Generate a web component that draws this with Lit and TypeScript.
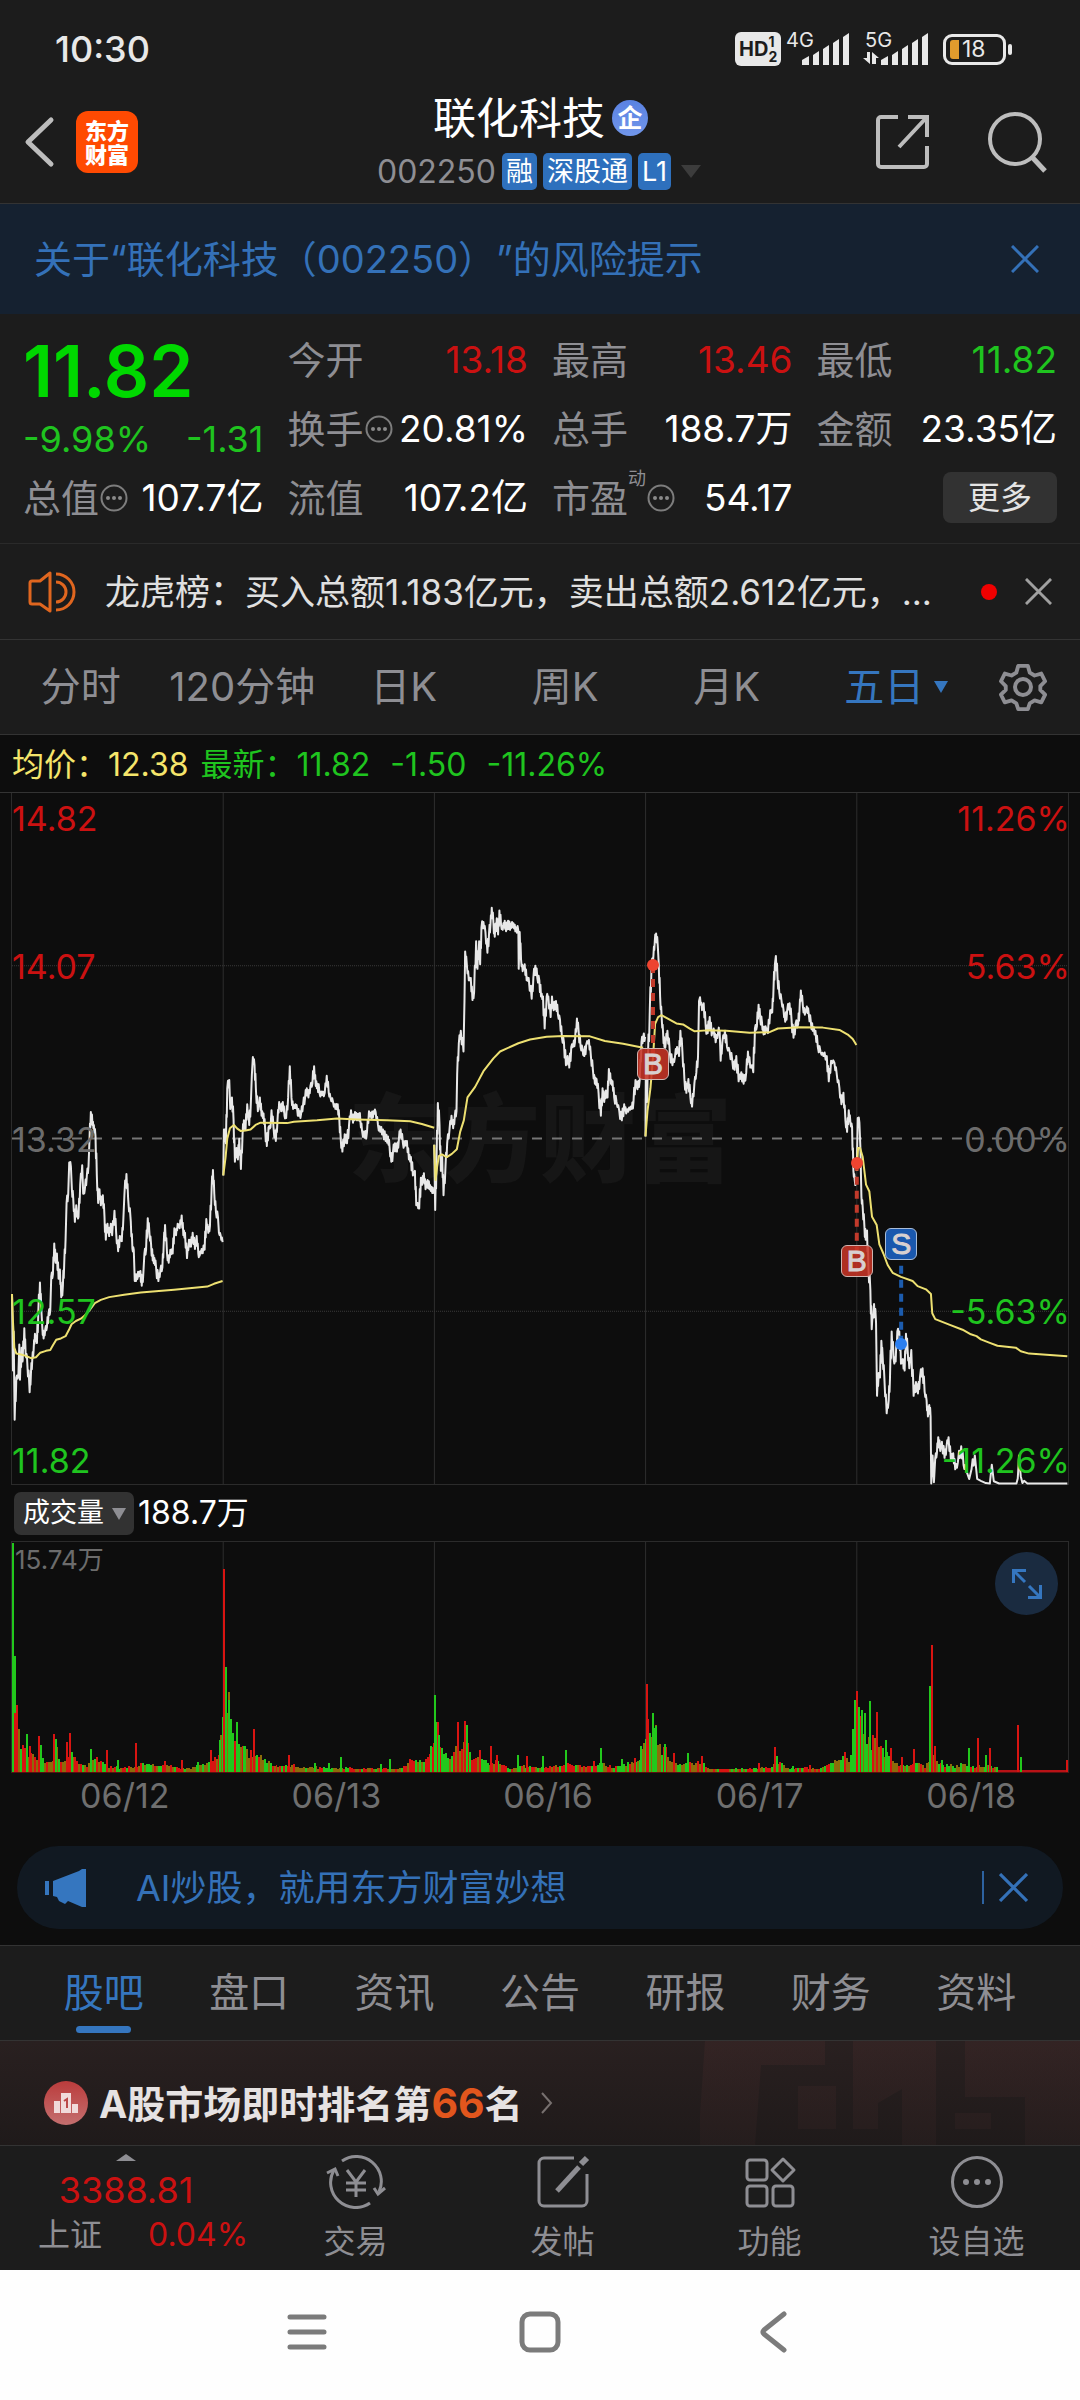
import { LitElement, html, svg, css } from "lit";
import { customElement } from "lit/decorators.js";

const FONT = css`"Inter", "Noto Sans CJK SC", sans-serif`;

/* ---------- chart data ---------- */

/* Plot space of the five-day price chart: x 33..3207, y 27..1532 */
const PRICE: string[] = [
  "33,1118 36,1285 38,1200 41,1392 46,1300 52,1298 55,1228 57,1305 62,1235 65,1265 70,1193 74,1250 78,1255 81,1298 83,1285 86,1332 90,1290 94,1260 98,1240 102,1205 108,1225 112,1160 117,1093 121,1150 124,1190 128,1215 133,1195 138,1190 143,1160 148,1155 151,1080 156,1075 160,1008 164,1050 168,1030 173,1085 177,1065 181,1125 186,1100 190,1050 194,1000 197,920 202,900 205,832 210,840 213,890 217,910 222,961 226,925 229,950 233,950 238,880 244,838 247,900 252,890 258,860 263,840 266,780 270,722 275,750 279,750 284,775 288,860 292,920 296,890 300,925 306,903 311,950 315,1000 320,965 325,992 330,965 334,990 341,937 346,985 352,1025 357,992 363,1003 368,950 371,900 377,857 382,910 390,960 395,1020 399,1022 402,1090 408,1075 414,1080 419,1068 423,1100 428,1070 431,1030 436,1022 441,953 446,985 451,1010 456,1045 461,1040 466,1060 473,1090 479,1065 485,1060 489,1010 493,968 499,1030 504,1050 509,1022 516,1030 521,975 526,990 531,965 537,975 543,947 548,990 553,985 559,1040 565,1000 571,1015 576,985 583,1020 588,992 593,1030 597,1035 603,1020 612,1022 617,955 623,985 628,970 633,890 637,848 641,900 646,940 652,950 655,985 660,990 666,1005",
  "668,860 670,760 673,760 676,790 680,670 686,652 689,715 694,690 699,740 703,830 708,800 712,825 716,780 721,846 726,770 730,740 735,760 740,705 746,750 751,700 754,640 757,602 762,620 766,670 772,720 778,690 783,730 789,725 794,760 799,796 804,755 810,755 813,718 819,755 826,785 831,740 836,700 842,720 847,700 852,730 857,735 863,690 868,622 873,690 878,715 885,705 890,715 896,730 902,725 908,705 914,690 919,670 924,690 930,665 936,660 941,622 946,665 951,660 957,680 965,685 973,680 979,643 985,680 990,690 998,700 1005,715 1012,705 1017,740 1021,780 1026,808 1033,770 1040,790 1046,750 1052,718 1058,745 1064,722 1070,740 1076,725 1080,740 1085,762 1093,778 1100,765 1106,720 1113,735 1120,720 1126,722 1133,750 1140,765 1148,760 1156,785 1163,775 1168,800 1173,830 1178,810 1184,790 1190,808 1196,780 1201,760 1208,790 1214,795 1220,785 1226,825 1232,820 1238,860 1244,850 1248,925 1252,920 1257,932 1262,865 1266,880 1271,855 1276,890 1282,870 1288,890 1294,885 1300,900",
  "1302,793 1305,935 1309,830 1313,702 1318,750 1322,850 1326,820 1330,903 1336,840 1341,790 1348,760 1354,730 1359,757 1364,730 1369,720 1371,640 1376,572 1382,545 1390,590 1393,480 1395,372 1400,400 1406,435 1412,430 1417,478 1422,460 1428,350 1432,410 1437,350 1440,400 1444,320 1450,308 1456,330 1462,375 1467,330 1471,315 1475,277 1480,310 1484,340 1490,300 1494,335 1498,283 1503,315 1508,325 1514,305 1518,328 1524,305 1530,325 1536,308 1542,322 1548,320 1555,328 1556,410 1559,330 1563,390 1568,415 1574,400 1580,435 1586,430 1595,475 1600,430 1606,403 1612,430 1618,435 1623,470 1629,470 1634,540 1640,470 1645,470 1652,515 1656,470 1661,500 1668,480 1674,510 1680,520 1686,560 1692,570 1698,620 1703,600 1708,625 1714,580 1720,575 1725,570 1731,518 1736,545 1742,580 1748,585 1753,600 1759,575 1767,565 1773,600 1779,630 1785,660 1790,650 1796,680 1803,730 1808,670 1813,700 1818,675 1823,690 1827,628 1833,660 1838,655 1843,690 1850,700 1858,718 1866,740 1873,705 1879,725 1888,712 1896,715 1901,700 1907,652 1913,672 1920,650 1925,570 1930,560 1936,558",
  "1937,775 1938,640 1942,700 1944,620 1950,500 1955,410 1961,380 1965,350 1969,333 1974,360 1977,400 1981,470 1986,520 1990,550 1994,580 1998,570 2003,545 2010,590 2018,620 2026,600 2032,580 2038,600 2042,545 2048,590 2054,650 2060,680 2066,650 2072,690 2077,710 2084,660 2090,635 2095,600 2098,480 2101,472 2107,500 2112,485 2118,535 2124,550 2130,515 2136,555 2142,540 2148,570 2156,545 2160,545 2163,610 2168,570 2176,545 2182,580 2190,590 2198,610 2205,630 2210,600 2217,655 2225,635 2232,660 2240,635 2245,590 2252,625 2258,620 2261,635 2266,540 2272,535 2277,488 2282,520 2287,525 2292,553 2298,535 2305,550 2312,500 2318,505 2322,450 2326,400 2329,382 2334,430 2339,460 2346,480 2352,500 2357,525 2363,500 2370,485 2376,520 2382,560 2388,530 2396,530 2400,500 2404,457 2410,490 2416,510 2422,492 2428,510 2434,525 2440,545 2448,545 2455,580 2463,590 2472,600 2482,600 2488,655 2495,610 2505,615 2512,640 2520,670 2526,705 2532,680 2538,740 2543,765 2548,718 2553,745 2558,755 2562,850 2566,870 2571,876",
  "2572,850 2575,735 2580,745 2583,800 2586,905 2590,930 2595,970 2599,1000 2603,980 2607,1060 2613,1110 2617,1195 2624,1140 2630,1180 2633,1340 2638,1290 2642,1300 2646,1220 2650,1255 2655,1300 2662,1378 2668,1350 2672,1300 2677,1200 2683,1260 2689,1265 2694,1200 2700,1200 2705,1270 2711,1260 2716,1285 2720,1205 2725,1240 2730,1280 2736,1240 2743,1340 2750,1310 2756,1335 2762,1300 2770,1280 2776,1330 2782,1350 2786,1385 2790,1360 2794,1385 2796,1531 2800,1470 2804,1528 2808,1475 2813,1465 2817,1430 2823,1460 2828,1440 2836,1475 2842,1450 2848,1430 2855,1480 2862,1465 2868,1500 2876,1485 2886,1450 2893,1490 2900,1500 2910,1521 2917,1500 2927,1470 2934,1521 2945,1525 2960,1530 2972,1531 2978,1490 2984,1526 3000,1531 3052,1531 3056,1520 3060,1470 3065,1515 3070,1530 3075,1525 3085,1531 3205,1531",
];

const AVERAGE: string[] = [
  "33,1118 36,1180 40,1235 46,1248 60,1250 75,1253 90,1258 105,1256 118,1246 135,1242 148,1240 156,1230 166,1218 180,1215 194,1210 205,1195 212,1184 225,1177 240,1172 255,1163 268,1152 282,1138 300,1131 325,1125 370,1120 420,1115 520,1109 620,1102 640,1096 666,1090",
  "668,860 675,820 680,780 688,757 700,750 710,758 720,763 735,762 750,760 765,750 780,745 860,746 880,743 950,740 1010,736 1070,738 1160,740 1230,742 1265,748 1302,756",
  "1302,793 1306,870 1311,840 1316,818 1325,814 1340,820 1355,813 1370,803 1380,765 1391,740 1402,690 1425,667 1450,633 1480,605 1500,590 1555,572 1590,564 1640,558 1690,556 1770,557 1815,567 1870,573 1930,582",
  "1937,775 1943,720 1952,670 1960,600 1966,530 1975,515 1985,511 2000,517 2015,523 2030,529 2050,531 2070,540 2085,546 2120,544 2180,545 2250,549 2310,548 2335,540 2400,537 2470,538 2520,543 2545,553 2560,563 2571,576",
  "2572,850 2576,800 2582,800 2590,820 2600,880 2610,895 2618,950 2632,968 2640,1010 2652,1030 2665,1055 2680,1072 2705,1081 2740,1090 2755,1101 2780,1108 2795,1118 2799,1160 2808,1173 2850,1185 2890,1196 2915,1206 2932,1210 2945,1217 2970,1224 2995,1231 3050,1235 3065,1243 3090,1248 3205,1254",
];

/* Volume in plot units (1058 wide, 232 tall): background level, then single peaks */
const VOLUME_LEVEL: [number, number][] = [
  [0, 121], [3, 108], [4, 57], [6, 40], [8, 28], [11, 22], [23, 16], [34, 12], [37, 9], [41, 10], [43, 24], [47, 15], [51, 9],
  [59, 20], [65, 10], [69, 10], [74, 7], [80, 17], [87, 11], [92, 7], [99, 5], [111, 5], [122, 5], [129, 9], [137, 8], [144, 5],
  [154, 8], [161, 5], [177, 4], [184, 6], [194, 9], [200, 14], [204, 15], [207, 26], [211, 55], [215, 80], [217, 68], [221, 42],
  [225, 30], [229, 25], [232, 24], [236, 18], [243, 22], [249, 14], [255, 11], [261, 7], [267, 5], [282, 7], [289, 4], [304, 5],
  [324, 4], [335, 5], [344, 3], [370, 4], [379, 4], [389, 4], [397, 8], [402, 12], [415, 11], [420, 25], [424, 50], [428, 34],
  [432, 20], [436, 15], [441, 15], [445, 26], [450, 24], [456, 32], [459, 16], [464, 13], [470, 15], [477, 9], [485, 12], [489, 7],
  [500, 4], [510, 6], [527, 5], [539, 5], [550, 9], [562, 7], [579, 5], [592, 9], [601, 5], [612, 7], [618, 9], [627, 10],
  [630, 20], [635, 36], [639, 38], [643, 42], [646, 36], [650, 23], [655, 22], [659, 10], [669, 7], [675, 10], [683, 8], [690, 12],
  [695, 5], [704, 3], [719, 3], [743, 4], [758, 5], [768, 10], [774, 4], [789, 4], [811, 4], [820, 9], [830, 14], [836, 12],
  [841, 16], [844, 50], [848, 62], [852, 45], [856, 34], [860, 26], [864, 38], [868, 26], [874, 20], [880, 15], [887, 9],
  [900, 6], [909, 12], [914, 5], [918, 12], [922, 17], [926, 14], [932, 7], [946, 6], [952, 9], [960, 6], [971, 6], [984, 6],
  [989, 2], [1007, 2], [1011, 8], [1016, 3], [1024, 2], [1054, 2], [1058, 8],
];

type Peak = [number, number, "up" | "down"];
const VOLUME_PEAKS: Peak[] = [
  [1, 231, "down"], [3, 60, "up"], [5, 43, "up"], [15, 38, "down"], [18, 26, "up"], [27, 36, "up"], [29, 27, "down"],
  [42, 38, "up"], [44, 33, "down"], [55, 30, "up"], [58, 39, "up"], [60, 20, "down"], [79, 23, "down"], [95, 22, "up"],
  [106, 12, "down"], [124, 29, "up"], [153, 11, "up"], [170, 12, "up"], [186, 10, "down"], [199, 22, "up"], [208, 32, "down"],
  [212, 205, "up"], [214, 106, "down"], [217, 73, "down"], [219, 53, "down"], [225, 50, "down"], [232, 26, "down"],
  [242, 43, "up"], [278, 17, "up"], [304, 9, "down"], [318, 9, "down"], [330, 15, "down"], [370, 8, "down"], [379, 13, "down"],
  [399, 13, "up"], [420, 26, "down"], [424, 78, "down"], [427, 50, "up"], [428, 37, "down"], [447, 50, "up"], [454, 51, "up"],
  [456, 47, "down"], [469, 22, "up"], [480, 26, "up"], [486, 17, "up"], [507, 17, "down"], [516, 16, "up"], [532, 16, "down"],
  [555, 22, "down"], [583, 11, "up"], [590, 24, "down"], [611, 13, "down"], [624, 14, "up"], [630, 26, "down"],
  [636, 89, "up"], [637, 53, "up"], [642, 60, "down"], [645, 46, "down"], [654, 28, "down"], [663, 19, "up"], [677, 19, "down"],
  [691, 16, "up"], [748, 9, "up"], [764, 25, "up"], [766, 16, "down"], [782, 6, "down"], [800, 7, "up"], [835, 20, "up"],
  [843, 43, "down"], [845, 73, "down"], [847, 82, "up"], [849, 66, "down"], [852, 63, "down"], [855, 60, "down"],
  [860, 72, "down"], [867, 61, "up"], [876, 32, "down"], [881, 24, "up"], [892, 15, "up"], [904, 23, "up"],
  [920, 87, "down"], [922, 128, "up"], [925, 26, "up"], [932, 12, "down"], [959, 24, "down"], [968, 34, "up"],
  [976, 17, "down"], [980, 24, "up"], [1008, 47, "up"], [1011, 15, "down"], [1057, 12, "up"],
];

function levelAt(x: number): number {
  for (let i = 1; i < VOLUME_LEVEL.length; i++) {
    const [x1, h1] = VOLUME_LEVEL[i];
    if (x <= x1) {
      const [x0, h0] = VOLUME_LEVEL[i - 1];
      return h0 + ((h1 - h0) * (x - x0)) / (x1 - x0);
    }
  }
  return 2;
}

/* Small repeatable generator, so the minute values look the same on each render */
function sequence(seed: number): () => number {
  let s = seed;
  return () => {
    s = (s * 1103515245 + 12345) % 2147483648;
    return s / 2147483648;
  };
}

/* Puts a small swing between each two turning points of a day */
function withSwings(points: string, seed: number): string {
  const next = sequence(seed);
  const pts = points.split(" ").map((p) => p.split(",").map(Number));
  const out: string[] = [];
  pts.forEach(([x, y], i) => {
    out.push(`${x},${y}`);
    const after = pts[i + 1];
    if (!after || after[0] - x < 4 || y > 1500 || after[1] > 1500) return;
    const mid = (y + after[1]) / 2;
    const swing = 2 + 7 * next();
    const dir = after[1] > y ? -1 : 1;
    out.push(`${x + (after[0] - x) * 0.35},${(mid - dir * swing).toFixed(1)}`);
    out.push(`${x + (after[0] - x) * 0.65},${(mid + dir * swing).toFixed(1)}`);
  });
  return out.join(" ");
}

const PRICE_LINES = PRICE.map((p, i) => withSwings(p, i + 3));

const COLUMNS = [20, 40, 60, 80].map((p) => p + "%");

@customElement("price-chart")
export class PriceChart extends LitElement {
  static styles = css`
    :host { display: block; font-family: ${FONT}; }
    .plot { position: relative; margin: 0 11px; height: 692px; box-sizing: border-box; border: solid #2b2b2b; border-width: 0 1px 1px; }
    .watermark {
      position: absolute; inset: 0; display: flex; align-items: center; justify-content: center;
      font-size: 96px; line-height: 96px; font-weight: 900; color: #161616;
    }
    .canvas { position: absolute; inset: 0; width: 100%; height: 100%; overflow: visible; }
    .grid { stroke: #2e2e2e; stroke-width: 1; }
    .dots { stroke: #3a3a3a; stroke-width: 1; stroke-dasharray: 1 1; }
    .zero { stroke: #757575; stroke-width: 2; stroke-dasharray: 10 10; }
    .line { fill: none; stroke: #e8e8e8; stroke-width: 2; stroke-linejoin: round; vector-effect: non-scaling-stroke; }
    .avg { fill: none; stroke: #ede071; stroke-width: 2; stroke-linejoin: round; vector-effect: non-scaling-stroke; }
    .label { position: absolute; font-size: 34px; line-height: 40px; transform: translateY(-50%); }
    .left { left: 0; }
    .right { right: -2px; }
    .l0 { top: 26px; } .l1 { top: calc(25% + 1px); } .l2 { top: calc(50% + 1px); } .l3 { top: calc(75% + 1px); } .l4 { top: calc(100% - 23px); }
    .up { color: #cb1111; } .down { color: #1fc41f; } .flat { color: #6c6c6c; }
    .stem { stroke-width: 4; stroke-dasharray: 8 6; }
    .stem.buy { stroke: #c13a2b; } .stem.sell { stroke: #1c5cae; }
    .dot { position: absolute; width: 12px; height: 12px; border-radius: 50%; transform: translate(-50%, -50%); }
    .dot.buy { background: #ee4430; } .dot.sell { background: #2b7ff0; }
    .badge {
      position: absolute; width: 32px; height: 32px; box-sizing: border-box; border: 1px solid #cfb4b0; border-radius: 6px;
      transform: translate(-50%, -50%); font: 30px/30px "Liberation Sans", sans-serif; text-align: center; color: #d8d0d0;
      -webkit-text-stroke: 1px #d8d0d0;
    }
    .badge.buy { background: rgba(198, 52, 38, 0.88); } .badge.sell { background: #1a58ae; border-color: #a8bcd8; }
  `;

  private labels: [string, string, string][] = [
    ["14.82", "11.26%", "up"],
    ["14.07", "5.63%", "up"],
    ["13.32", "0.00%", "flat"],
    ["12.57", "-5.63%", "down"],
    ["11.82", "-11.26%", "down"],
  ];

  /* x and y are percentages of the plot; from = the traded price, to = the badge */
  private trades = [
    { kind: "buy", text: "B", x: 60.7, from: 24.9, to: 39.2 },
    { kind: "buy", text: "B", x: 80, from: 53.5, to: 67.7 },
    { kind: "sell", text: "S", x: 84.2, from: 79.7, to: 65.3 },
  ];

  render() {
    return html`
      <div class="plot">
        <div class="watermark" aria-hidden="true">东方财富</div>
        <svg class="canvas" aria-hidden="true">
          ${COLUMNS.map((x) => svg`<line class="grid" x1=${x} x2=${x} y1="0" y2="100%" />`)}
          <line class="dots" x1="0" x2="100%" y1="25%" y2="25%" />
          <line class="dots" x1="0" x2="100%" y1="75%" y2="75%" />
          <line class="zero" x1="0" x2="100%" y1="50%" y2="50%" />
        </svg>
        <svg class="canvas" viewBox="33 27 3174 1505" preserveAspectRatio="none" role="img" aria-label="五日走势">
          ${PRICE_LINES.map((p) => svg`<polyline class="line" points=${p} />`)}
          ${AVERAGE.map((p) => svg`<polyline class="avg" points=${p} />`)}
        </svg>
        <svg class="canvas" aria-hidden="true">
          ${this.trades.map((t) => svg`<line class="stem ${t.kind}" x1="${t.x}%" x2="${t.x}%" y1="${t.from}%" y2="${t.to}%" />`)}
        </svg>
        ${this.trades.map(
          (t) => html`
            <span class="dot ${t.kind}" style="left:${t.x}%;top:${t.from}%"></span>
            <span class="badge ${t.kind}" style="left:${t.x}%;top:${t.to}%">${t.text}</span>
          `
        )}
        ${this.labels.map(
          ([price, pct, tone], i) => html`
            <span class="label left l${i} ${tone}">${price}</span>
            <span class="label right l${i} ${tone}">${pct}</span>
          `
        )}
      </div>
    `;
  }
}

@customElement("volume-chart")
export class VolumeChart extends LitElement {
  static styles = css`
    :host { display: block; font-family: ${FONT}; }
    .plot { position: relative; margin: 0 11px; height: 232px; box-sizing: border-box; border: 1px solid #2b2b2b; border-bottom-color: #5a1010; }
    .canvas { position: absolute; inset: 0; width: 100%; height: 100%; overflow: visible; }
    .grid { stroke: #2e2e2e; stroke-width: 1; }
    .bars { shape-rendering: crispEdges; }
    .up { fill: #d81411; } .down { fill: #22c81c; } .mix { fill: #8c6c0a; }
    .tail { fill: #b81216; }
    .max { position: absolute; left: 3px; top: 2px; font-size: 26px; line-height: 32px; color: #6c6c6c; }
    .expand {
      position: absolute; right: 10px; top: 10px; width: 63px; height: 63px; padding: 0; border: 0; border-radius: 50%;
      background: #1a2b40; display: flex; align-items: center; justify-content: center; cursor: pointer;
    }
    .dates { display: flex; padding: 0 3px 0 19px; }
    .date { flex: 1; text-align: center; font-size: 34px; line-height: 46px; color: #6f6f6f; }
  `;

  private bars() {
    const next = sequence(20);
    const out = [];
    for (let x = 0; x < 988; x += 2) {
      const h = Math.max(3, levelAt(x) * (0.7 + 0.5 * next()));
      const r = next();
      const tone = r < 0.3 ? "up" : r < 0.6 ? "down" : "mix";
      out.push(svg`<rect class=${tone} x=${x} y=${232 - h} width="2" height=${h} />`);
    }
    return out;
  }

  render() {
    return html`
      <div class="plot">
        <svg class="canvas" aria-hidden="true">
          ${COLUMNS.map((x) => svg`<line class="grid" x1=${x} x2=${x} y1="0" y2="100%" />`)}
        </svg>
        <svg class="canvas bars" viewBox="0 0 1058 232" preserveAspectRatio="none" role="img" aria-label="成交量柱状图">
          ${this.bars()}
          <rect class="tail" x="988" y="230" width="70" height="2" />
          ${VOLUME_PEAKS.map(([x, h, tone]) => svg`<rect class=${tone} x=${x - 1} y=${232 - h} width="2" height=${h} />`)}
        </svg>
        <span class="max">15.74万</span>
        <button class="expand" aria-label="全屏">
          <svg width="34" height="34" viewBox="0 0 34 34" fill="none" stroke="#3576bf" stroke-width="3">
            <path d="M3.500 16V3.500H16M4 4l11 11M30.500 18v12.500H18M30 30L19 19" />
          </svg>
        </button>
      </div>
      <div class="dates">
        ${["06/12", "06/13", "06/16", "06/17", "06/18"].map((d) => html`<span class="date">${d}</span>`)}
      </div>
    `;
  }
}

const more = html`<svg class="info" width="28" height="30" viewBox="0 0 28 28" aria-hidden="true">
  <circle cx="14" cy="14" r="12.500" fill="none" stroke="#7d7d7d" stroke-width="2" />
  <g fill="#8a8a8a"><circle cx="8" cy="14" r="2" /><circle cx="14" cy="14" r="2" /><circle cx="20" cy="14" r="2" /></g>
</svg>`;

const cross = (size: number) => html`<svg width=${size} height=${size} viewBox="0 0 28 28" fill="none" stroke="currentColor" stroke-width="3">
  <path d="M1 1L27 27M27 1L1 27" />
</svg>`;

const signal = html`<svg width="48" height="32" viewBox="0 0 48 32" fill="#e8e8e8" aria-hidden="true">
  <path d="M0 27l7-4v9H0zM11 22l6-4v14h-6zM21 16l6-4v20h-6zM31 10l6-4v26h-6zM41 4l6-4v32h-6z" />
</svg>`;

@customElement("app-root")
export class AppRoot extends LitElement {
  static styles = css`
    :host { display: block; background: #0d0d0d; color: #fff; font-family: ${FONT}; }
    * { box-sizing: border-box; }
    button, select { font: inherit; color: inherit; background: none; border: 0; padding: 0; margin: 0; cursor: pointer; }
    a { color: inherit; text-decoration: none; }
    svg { display: block; flex: none; }
    .panel { background: #1c1c1c; }

    .status { display: flex; align-items: center; padding: 4px 74px 0 55px; height: 94px; }
    .time { flex: 1; font-size: 36px; line-height: 44px; font-weight: 500; color: #e8e8e8; }
    .hd {
      display: flex; align-items: center; width: 46px; height: 34px; padding-left: 4px; border-radius: 6px; background: #e8e8e8; color: #1c1c1c;
      font-size: 20px; line-height: 20px; font-weight: 700;
    }
    .hd-num { display: flex; flex-direction: column; font-size: 14px; line-height: 15px; }
    .net { position: relative; display: flex; padding-left: 16px; margin-left: 5px; }
    .net.second { padding-left: 18px; margin-left: 13px; }
    .gen { position: absolute; left: 0; top: 0; font-size: 20px; line-height: 15px; color: #e8e8e8; }
    .second .gen { left: 2px; }
    .updown { position: absolute; left: 0; bottom: 1px; }
    .battery { position: relative; display: flex; align-items: center; gap: 3px; width: 63px; height: 31px; margin-left: 14px; padding-left: 4px; border: 3px solid #e8e8e8; border-radius: 9px; }
    .battery::after { content: ""; position: absolute; left: 62px; top: 7px; width: 4px; height: 11px; border-radius: 2px; background: #e8e8e8; }
    .charge { width: 9px; height: 19px; border-radius: 3px 0 0 3px; background: #e09b2d; }
    .level { font-size: 23px; line-height: 25px; color: #e8e8e8; }

    .header { display: grid; grid-template-columns: 1fr auto 1fr; align-items: center; height: 110px; padding: 0 32px 13px 24px; border-bottom: 1px solid #333; }
    .home { display: flex; align-items: center; gap: 21px; }
    .logo {
      width: 62px; height: 62px; padding-top: 8px; border-radius: 12px; background: #ff4a02; color: #fff;
      font-size: 22px; line-height: 24px; font-weight: 900; text-align: center;
    }
    .title { display: flex; flex-direction: column; align-items: center; gap: 11px; padding-left: 6px; }
    .name { display: flex; align-items: center; gap: 7px; margin: 0; padding-left: 3px; font-size: 43px; line-height: 48px; font-weight: 400; }
    .corp { width: 36px; height: 36px; border-radius: 50%; background: linear-gradient(#5a82e2, #7196ea); font-size: 25px; line-height: 36px; font-weight: 700; text-align: center; }
    .code { display: flex; align-items: center; gap: 6px; font-size: 32px; line-height: 37px; color: #8e8e93; }
    .tag { padding: 0 4px; border-radius: 5px; background: #2e70bd; color: #fff; font-size: 27px; line-height: 37px; }
    .caret { margin-left: 4px; }
    .tools { display: flex; justify-content: flex-end; gap: 58px; }

    .risk { display: flex; align-items: center; justify-content: space-between; height: 110px; padding: 0 41px 0 34px; background: #152130; color: #3471b8; font-size: 38px; line-height: 48px; text-spacing-trim: space-all; }

    .quotes { display: grid; grid-template-columns: repeat(4, 1fr); grid-auto-rows: 69px; column-gap: 24px; padding: 11px 23px 11px; border-bottom: 1px solid #2a2a2a; font-size: 37px; line-height: 44px; }
    .last { grid-row: span 2; display: flex; flex-direction: column; }
    .price { font-size: 71px; line-height: 92px; font-weight: 600; color: #00d800; }
    .change { display: flex; justify-content: space-between; font-size: 36px; color: #1fc41f; }
    .cell { display: flex; align-items: center; white-space: nowrap; }
    .key { font-size: 38px; color: #8e8e93; }
    .val { margin-left: auto; }
    .sup { align-self: flex-start; font-size: 18px; line-height: 24px; padding-top: 4px; color: #8e8e93; }
    .up { color: #cb1111; } .down { color: #1fc41f; }
    .info { margin-left: 1px; }
    .more { margin-left: auto; width: 114px; height: 51px; border-radius: 8px; background: #323232; color: #e4e4e4; font-size: 32px; line-height: 48px; }

    .ticker { display: flex; align-items: center; height: 96px; padding: 0 28px; border-bottom: 1px solid #333; color: #e0e0e0; font-size: 35px; line-height: 48px; }
    .news { flex: 1; margin-left: 29px; white-space: nowrap; }
    .red-dot { width: 16px; height: 16px; border-radius: 50%; background: #f00000; margin: 0 28px; }
    .dim { color: #a0a0a0; }

    .periods { display: flex; align-items: center; height: 95px; border-bottom: 1px solid #333; color: #8e8e93; font-size: 40px; line-height: 48px; }
    .period { flex: 1; white-space: nowrap; }
    .period.active { color: #3576bf; }
    .pulldown { display: inline-flex; align-items: center; gap: 10px; padding-left: 16px; }
    .gear { display: flex; width: 111px; padding-left: 30px; }

    .legend { display: flex; height: 58px; align-items: center; gap: 12px; padding: 2px 0 0 12px; border-bottom: 1px solid #333; font-size: 32px; line-height: 40px; }
    .legend .avg { color: #f5e56b; }
    .legend .group { display: flex; gap: 20px; }
    .legend .pair { display: flex; }

    .vol-head { display: flex; align-items: center; gap: 4px; height: 56px; padding: 0 14px; font-size: 32px; line-height: 40px; }
    .pick { position: relative; display: flex; align-items: center; }
    .pick select { appearance: none; width: 120px; height: 43px; padding: 0 0 0 9px; border-radius: 7px; background: #323232; font-size: 27px; line-height: 40px; }
    .pick svg { position: absolute; right: 8px; top: 16px; pointer-events: none; }

    .ai { display: flex; align-items: center; height: 83px; margin: 27px 17px 16px; padding: 0 35px 0 28px; border-radius: 42px; background: #111922; color: #3471b8; font-size: 36px; line-height: 48px; }
    .ai-text { flex: 1; margin-left: 49px; }
    .ai-close { display: flex; padding-left: 15px; border-left: 2px solid #2d62a0; height: 33px; align-items: center; }

    .sections { display: flex; height: 96px; padding: 0 31px; border: solid #333; border-width: 1px 0; color: #8e8e93; font-size: 40px; line-height: 48px; }
    .section { flex: 1; display: flex; flex-direction: column; align-items: center; padding-top: 23px; }
    .section.active { color: #3576bf; }
    .section.active::after { content: ""; width: 55px; height: 7px; margin-top: 9px; border-radius: 4px; background: #3576bf; }

    .rank { position: relative; display: flex; align-items: center; height: 105px; padding: 20px 44px 0; border-bottom: 1px solid #333; background: linear-gradient(#292020, #1f1a1a); color: #e6e2e2; font-size: 38px; line-height: 48px; font-weight: 700; overflow: hidden; }
    .rank-art { position: absolute; right: 0; top: 0; }
    .rank-text { margin: 0 17px 0 11px; }
    .hot { font-size: 41px; color: #e2561d; }

    .bottom { display: flex; height: 124px; color: #8e8e93; font-size: 32px; line-height: 40px; }
    .index { flex: 0 0 252px; display: flex; flex-direction: column; align-items: center; padding-top: 8px; }
    .index-value { font-size: 36px; line-height: 46px; margin-top: 6px; color: #cb1111; }
    .index-row { display: flex; gap: 46px; padding-left: 38px; align-self: stretch; line-height: 44px; }
    .action { flex: 1; display: flex; flex-direction: column; align-items: center; gap: 13px; padding-top: 9px; }

    .nav { display: flex; justify-content: center; gap: 179px; height: 130px; padding-top: 35px; background: #fefefe; }
    .nav-btn { height: 54px; width: 54px; }
  `;

  private quotes() {
    const cell = (key: unknown, val: string, tone = "") =>
      html`<div class="cell"><span class="key">${key}</span><span class="val ${tone}">${val}</span></div>`;
    const cellInfo = (key: string, val: string, sup = "") =>
      html`<div class="cell">
        <span class="key">${key}</span>${sup ? html`<span class="sup">${sup}</span>` : ""}${more}<span class="val">${val}</span>
      </div>`;
    return html`
      <section class="panel quotes">
        <div class="last">
          <span class="price">11.82</span>
          <div class="change"><span>-9.98%</span><span>-1.31</span></div>
        </div>
        ${cell("今开", "13.18", "up")} ${cell("最高", "13.46", "up")} ${cell("最低", "11.82", "down")}
        ${cellInfo("换手", "20.81%")} ${cell("总手", "188.7万")} ${cell("金额", "23.35亿")}
        ${cellInfo("总值", "107.7亿")} ${cell("流值", "107.2亿")} ${cellInfo("市盈", "54.17", "动")}
        <div class="cell"><button class="more">更多</button></div>
      </section>
    `;
  }

  render() {
    return html`
      <div class="panel status">
        <span class="time">10:30</span>
        <span class="hd">HD<span class="hd-num"><span>1</span><span>2</span></span></span>
        <span class="net"><span class="gen">4G</span>${signal}</span>
        <span class="net second"><span class="gen">5G</span>
          <svg class="updown" width="16" height="12" viewBox="0 0 16 12" fill="#e8e8e8"><path d="M4 0h3v12L0 6h4zM9 12V0l7 6h-3v6z" /></svg>
          ${signal}</span>
        <span class="battery"><span class="charge"></span><span class="level">18</span></span>
      </div>

      <header class="panel header">
        <div class="home">
          <button aria-label="返回">
            <svg width="31" height="52" viewBox="0 0 31 52" fill="none" stroke="#bdbdbd" stroke-width="5" stroke-linecap="round" stroke-linejoin="round">
              <path d="M27 4L4 26L27 48" />
            </svg>
          </button>
          <div class="logo">东方<br />财富</div>
        </div>
        <div class="title">
          <h1 class="name">联化科技<span class="corp">企</span></h1>
          <div class="code">
            <span>002250</span><span class="tag">融</span><span class="tag">深股通</span><span class="tag">L1</span>
            <svg class="caret" width="20" height="13" viewBox="0 0 20 13"><path d="M0 0h20L10 13z" fill="#3c3c3c" /></svg>
          </div>
        </div>
        <div class="tools">
          <button aria-label="分享">
            <svg width="54" height="56" viewBox="0 0 54 56" fill="none" stroke="#bdbdbd" stroke-width="4">
              <path d="M22 3H5a3 3 0 0 0-3 3v44a3 3 0 0 0 3 3h43a3 3 0 0 0 3-3V32M32 3h19v20M51 3L23 33" />
            </svg>
          </button>
          <button aria-label="搜索">
            <svg width="60" height="62" viewBox="0 0 60 62" fill="none" stroke="#bdbdbd" stroke-width="4">
              <circle cx="27" cy="28" r="25" /><path d="M44 46L57 60" stroke-width="5" />
            </svg>
          </button>
        </div>
      </header>

      <div class="risk">
        <a href="#risk">关于“联化科技（002250）”的风险提示</a>
        <button aria-label="关闭提示">${cross(28)}</button>
      </div>

      ${this.quotes()}

      <div class="panel ticker">
        <svg width="48" height="42" viewBox="0 0 48 42" fill="none" stroke="#e0661f" stroke-width="3" stroke-linejoin="round">
          <path d="M22 2v38l-10-7H4a2 2 0 0 1-2-2V12a2 2 0 0 1 2-2h8z" />
          <path d="M28 11a10 10 0 0 1 0 20M28 3a18 18 0 0 1 0 36" />
        </svg>
        <span class="news">龙虎榜：买入总额1.183亿元，卖出总额2.612亿元，...</span>
        <span class="red-dot"></span>
        <button class="dim" aria-label="关闭公告">${cross(27)}</button>
      </div>

      <nav class="panel periods">
        ${["分时", "120分钟", "日K", "周K", "月K"].map((p) => html`<button class="period">${p}</button>`)}
        <button class="period active">
          <span class="pulldown">五日<svg width="14" height="12" viewBox="0 0 14 12"><path d="M0 0h14L7 12z" fill="#3576bf" /></svg></span>
        </button>
        <button class="gear" aria-label="设置">
          <svg width="48" height="50" viewBox="0 0 48 50" fill="none" stroke="#8e8e93" stroke-width="4" stroke-linejoin="round">
            <path d="M19 3h10l2 7 5 3 7-2 4 8-5 5v4l5 5-4 8-7-2-5 3-2 6H19l-2-6-5-3-7 2-4-8 5-5v-4l-5-5 4-8 7 2 5-3z" transform="translate(1 1) scale(.96)" />
            <circle cx="24" cy="25" r="8" />
          </svg>
        </button>
      </nav>

      <div class="legend">
        <span class="pair avg"><span>均价：</span><span>12.38</span></span>
        <span class="group down"><span class="pair"><span>最新：</span><span>11.82</span></span><span>-1.50</span><span>-11.26%</span></span>
      </div>

      <price-chart></price-chart>

      <div class="vol-head">
        <label class="pick">
          <select aria-label="指标"><option>成交量</option></select>
          <svg width="14" height="12" viewBox="0 0 14 12"><path d="M0 0h14L7 12z" fill="#8e8e93" /></svg>
        </label>
        <span>188.7万</span>
      </div>

      <volume-chart></volume-chart>

      <div class="ai">
        <svg width="42" height="38" viewBox="0 0 42 38" fill="#3576bf">
          <path d="M0 12h4v14H0zM8 12L34 2l3-2h4v38h-4l-14-6-3 3-6-3-2-4-4-1z" />
        </svg>
        <a class="ai-text" href="#ai">AI炒股，就用东方财富妙想</a>
        <button class="ai-close" aria-label="关闭">${cross(29)}</button>
      </div>

      <nav class="panel sections">
        ${["股吧", "盘口", "资讯", "公告", "研报", "财务", "资料"].map(
          (s, i) => html`<button class="section ${i === 0 ? "active" : ""}">${s}</button>`
        )}
      </nav>

      <a class="rank" href="#rank">
        <svg class="rank-art" width="380" height="104" viewBox="0 0 380 104" aria-hidden="true">
          <defs><linearGradient id="fade" x1="0" y1="0" x2="0" y2="1"><stop offset="0" stop-color="#3a2626" stop-opacity=".6" /><stop offset="1" stop-color="#302222" stop-opacity=".35" /></linearGradient></defs>
          <path d="M5 0h120v24H61l-6 80H-2zM153 0h83v104h-34V48l-24 14v26h-25zM265 0h115v104h-55V56h-60zM98 45h38v43H98zM255 72h36v16h-36z" fill="url(#fade)" />
        </svg>
        <svg width="44" height="44" viewBox="0 0 44 44">
          <defs><linearGradient id="g" x1="0" y1="0" x2="0" y2="1"><stop offset="0" stop-color="#bb3c3c" /><stop offset="1" stop-color="#c46f6f" /></linearGradient></defs>
          <circle cx="22" cy="22" r="22" fill="url(#g)" />
          <path d="M10 20h6v12h-6zM17 12h10v20H17zM28 23h6v9h-6z" fill="#f0dada" />
          <path d="M20 20l3-2v9" fill="none" stroke="#bb4848" stroke-width="2" />
        </svg>
        <span class="rank-text">A股市场即时排名第<span class="hot">66</span>名</span>
        <svg width="13" height="22" viewBox="0 0 13 22" fill="none" stroke="#77706f" stroke-width="2"><path d="M2 1l9 10-9 10" /></svg>
      </a>

      <footer class="panel bottom">
        <div class="index">
          <svg width="20" height="7" viewBox="0 0 20 7"><path d="M0 7h20L10 0z" fill="#8e8e93" /></svg>
          <span class="index-value">3388.81</span>
          <span class="index-row"><span>上证</span><span class="up">0.04%</span></span>
        </div>
        <button class="action">
          <svg width="60" height="54" viewBox="0 0 60 54" fill="none" stroke="#8e8e93" stroke-width="3">
            <path d="M16 6a25 25 0 0 1 37 31M44 48A25 25 0 0 1 8 15" />
            <path d="M1 18l8-4 3 7M59 33l-7 6-4-6" />
            <path d="M21 15l9 12 9-12M30 27v15M20 28h20M20 35h20" />
          </svg>
          交易
        </button>
        <button class="action">
          <svg width="54" height="54" viewBox="0 0 54 54" fill="none" stroke="#8e8e93" stroke-width="3">
            <path d="M38 3H8a5 5 0 0 0-5 5v38a5 5 0 0 0 5 5h38a5 5 0 0 0 5-5V19" />
            <path d="M21 36L43 12" stroke-width="5" /><path d="M45 9l6-6" stroke-width="6" />
          </svg>
          发帖
        </button>
        <button class="action">
          <svg width="54" height="54" viewBox="0 0 54 54" fill="none" stroke="#8e8e93" stroke-width="3" stroke-linejoin="round">
            <rect x="4" y="5" width="20" height="20" rx="3" /><rect x="4" y="31" width="20" height="20" rx="3" />
            <rect x="30" y="31" width="20" height="20" rx="3" /><path d="M40 4l11 11-11 11-11-11z" />
          </svg>
          功能
        </button>
        <button class="action">
          <svg width="54" height="54" viewBox="0 0 54 54" fill="none" stroke="#8e8e93" stroke-width="3">
            <circle cx="27" cy="27" r="24.500" />
            <g fill="#8e8e93" stroke="none"><circle cx="16" cy="27" r="3" /><circle cx="27" cy="27" r="3" /><circle cx="38" cy="27" r="3" /></g>
          </svg>
          设自选
        </button>
      </footer>

      <nav class="nav">
        <button class="nav-btn" aria-label="最近任务">
          <svg width="54" height="54" viewBox="0 0 54 54" stroke="#7b7b7b" stroke-width="5" stroke-linecap="round"><path d="M10 12h34M10 27h34M10 42h34" /></svg>
        </button>
        <button class="nav-btn" aria-label="主页">
          <svg width="54" height="54" viewBox="0 0 54 54" fill="none" stroke="#7b7b7b" stroke-width="5"><rect x="9" y="9" width="36" height="36" rx="8" /></svg>
        </button>
        <button class="nav-btn" aria-label="后退">
          <svg width="54" height="54" viewBox="0 0 54 54" fill="none" stroke="#7b7b7b" stroke-width="5" stroke-linecap="round" stroke-linejoin="round"><path d="M38 9L18 25q-2 2 0 4L38 45" /></svg>
        </button>
      </nav>
    `;
  }
}
